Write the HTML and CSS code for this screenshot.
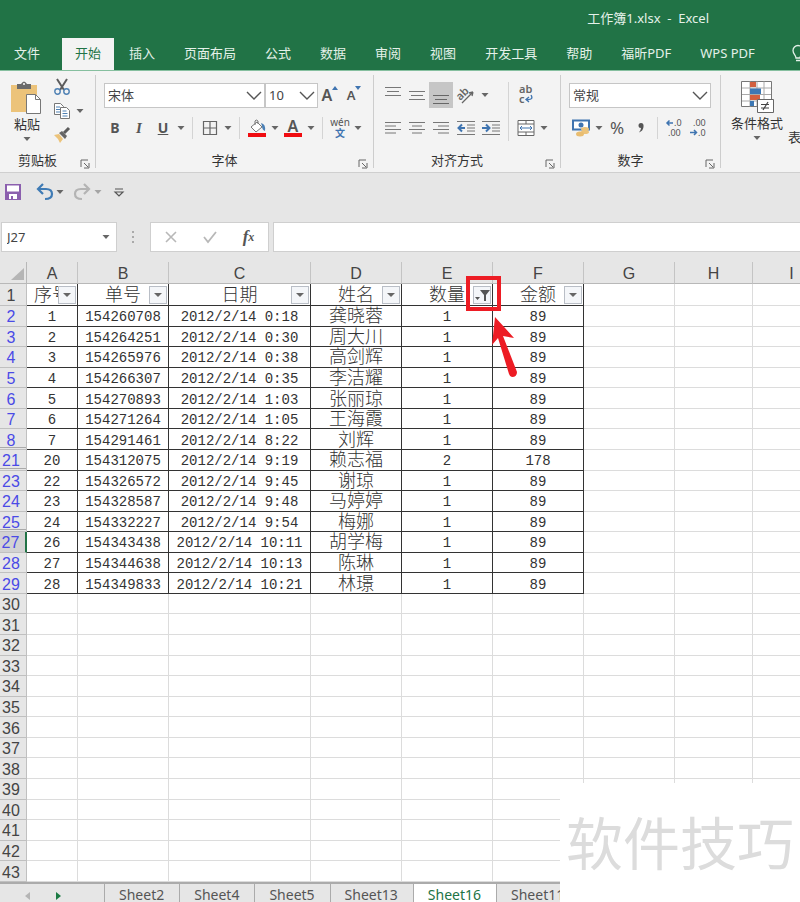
FILE: index.html
```html
<!DOCTYPE html>
<html lang="zh-CN">
<head>
<meta charset="utf-8">
<title>工作簿1.xlsx - Excel</title>
<link rel="stylesheet" href="styles.css">
</head>
<body>
<svg class="defs" aria-hidden="true">
  <symbol id="caret" viewBox="0 0 12 12"><path d="M2.500 4h7L6 8z" fill="#666"/></symbol>
  <symbol id="chevron" viewBox="0 0 16 10"><path d="M1 1l7 7 7-7" fill="none" stroke="#555" stroke-width="1.400"/></symbol>
  <symbol id="launcher" viewBox="0 0 10 10"><path d="M1 8V1h7M4 4l4 4M9 4v5H4" fill="none" stroke="#666"/></symbol>
</svg>
<header class="titlebar"><h1>工作簿1.xlsx&nbsp; -&nbsp; Excel</h1></header>
<nav class="tabs">
  <a class="file" href="#">文件</a><a class="active" href="#">开始</a><a href="#">插入</a><a href="#">页面布局</a><a href="#">公式</a><a href="#">数据</a><a href="#">审阅</a><a href="#">视图</a><a href="#">开发工具</a><a href="#">帮助</a><a href="#">福昕PDF</a><a href="#">WPS PDF</a>
  <svg class="bulb" width="14" height="18" viewBox="0 0 14 18"><path d="M5 13c0-3-3-4-3-7.500a5 5 0 0 1 10 0c0 3.500-3 4.500-3 7.500zM5 15.500h4" fill="none" stroke="#e4f1e9" stroke-width="1.300"/></svg>
</nav>

<section class="ribbon">
  <div class="group">
    <div class="body clip">
      <button class="big">
        <svg width="34" height="34" viewBox="0 0 34 34"><path d="M1 4h26v27H1z" fill="#ecc37a"/><path d="M7 3h4q3-5 6 0h4v5H7z" fill="#6b6b6b"/><circle cx="14" cy="3" r="1" fill="#fff"/><path d="M16.500 13.500h9l5 5v14h-14z" fill="#fff" stroke="#777"/><path d="M25.500 13.500v5h5" fill="none" stroke="#777"/></svg>
        <span>粘贴</span><svg class="caret"><use href="#caret"/></svg>
      </button>
      <div class="stack">
        <div><button class="b" aria-label="剪切"><svg width="18" height="18" viewBox="0 0 18 18"><path d="M4 1l7 11M14 1L7 12" stroke="#5c5c5c" stroke-width="2"/><circle cx="4.500" cy="13.500" r="2.700" fill="none" stroke="#4f81b4" stroke-width="1.400"/><circle cx="13.500" cy="13.500" r="2.700" fill="none" stroke="#4f81b4" stroke-width="1.400"/></svg></button></div>
        <div><button class="b" aria-label="复制"><svg width="18" height="18" viewBox="0 0 18 18"><path d="M1.500 1.500h6l3 3v8h-9z" fill="#fff" stroke="#777"/><path d="M3 5h4M3 7.500h4M3 10h4" stroke="#4f81b4"/><path d="M7.500 5.500h6l3 3v8h-9z" fill="#fff" stroke="#777"/><path d="M9.500 9h4M9.500 11.500h5M9.500 14h5" stroke="#4f81b4"/></svg></button><button class="c" aria-label="复制选项"><svg class="caret"><use href="#caret"/></svg></button></div>
        <div><button class="b" aria-label="格式刷"><svg width="18" height="18" viewBox="0 0 18 18"><path d="M1 9l5-1 4 5-3 4Q5 12 1 9z" fill="#ecc37a"/><path d="M6 7l6 6 2-3-5-5z" fill="#666"/><path d="M11 7l5-5" stroke="#5c5c5c" stroke-width="3"/></svg></button></div>
      </div>
    </div>
    <div class="label"><span>剪贴板</span><button aria-label="剪贴板设置"><svg><use href="#launcher"/></svg></button></div>
  </div>

  <div class="group">
    <div class="body rows">
      <div class="row">
        <label class="combo font"><select aria-label="字体"><option>宋体</option></select><svg><use href="#chevron"/></svg></label><label class="combo size"><select aria-label="字号"><option>10</option></select><svg><use href="#chevron"/></svg></label>
        <button class="b grow" aria-label="增大字号">A<svg width="6" height="4" viewBox="0 0 6 4"><path d="M0 4h6L3 0z" fill="#3f74b0"/></svg></button>
        <button class="b shrink" aria-label="减小字号">A<svg width="6" height="4" viewBox="0 0 6 4"><path d="M0 0h6L3 4z" fill="#3f74b0"/></svg></button>
      </div>
      <div class="row">
        <button class="b bold">B</button><button class="b ital">I</button><button class="b under">U</button><button class="c" aria-label="下划线选项"><svg class="caret"><use href="#caret"/></svg></button><i class="sep"></i>
        <button class="b" aria-label="边框"><svg width="16" height="16" viewBox="0 0 16 16"><path d="M1.500 1.500h13v13h-13zM8 1v14M1 8h14" fill="none" stroke="#666" stroke-width="1.200"/></svg></button><button class="c" aria-label="边框选项"><svg class="caret"><use href="#caret"/></svg></button><i class="sep"></i>
        <button class="b" aria-label="填充颜色"><svg width="18" height="18" viewBox="0 0 18 18"><path d="M3 8l6-5 5 5-6 5z" fill="#fff" stroke="#777"/><path d="M7 6V2q1-2 3 0v3" fill="none" stroke="#777"/><path d="M13 4q5 1 4 8-3-1-3-5z" fill="#4a7fb5"/><path d="M0 14h18v4H0z" fill="#f00c10"/></svg></button><button class="c" aria-label="填充选项"><svg class="caret"><use href="#caret"/></svg></button>
        <button class="b fontcolor" aria-label="字体颜色">A</button><button class="c" aria-label="颜色选项"><svg class="caret"><use href="#caret"/></svg></button><i class="sep"></i>
        <button class="b wen"><span>wén</span><b>文</b></button><button class="c" aria-label="拼音选项"><svg class="caret"><use href="#caret"/></svg></button>
      </div>
    </div>
    <div class="label"><span>字体</span><button aria-label="字体设置"><svg><use href="#launcher"/></svg></button></div>
  </div>

  <div class="group">
    <div class="body align">
      <div class="rows">
        <div class="row">
          <button class="b" aria-label="顶端对齐"><svg width="16" height="18" viewBox="0 0 16 18"><path d="M0 1.500h16M2 5.500h12M0 9.500h16" stroke="#777"/></svg></button><button class="b" aria-label="垂直居中"><svg width="16" height="18" viewBox="0 0 16 18"><path d="M0 5.500h16M2 9.500h12M0 13.500h16" stroke="#777"/></svg></button><button class="b on" aria-label="底端对齐"><svg width="16" height="18" viewBox="0 0 16 18"><path d="M0 9.500h16M2 13.500h12M0 17.500h16" stroke="#666"/></svg></button><button class="b wide" aria-label="方向"><svg width="20" height="20" viewBox="0 0 20 20"><text x="0" y="12" font-size="11" font-weight="600" fill="#666" transform="rotate(-45 7 9)">ab</text><path d="M6 18L17 7M17 7l-4 1M17 7l-1 4" stroke="#666" stroke-width="1.300" fill="none"/></svg></button><button class="c" aria-label="方向选项"><svg class="caret"><use href="#caret"/></svg></button>
        </div>
        <div class="row">
          <button class="b" aria-label="左对齐"><svg width="16" height="14" viewBox="0 0 16 14"><path d="M0 1.500h16M0 5h11M0 8.500h16M0 12h11" stroke="#777"/></svg></button><button class="b" aria-label="居中"><svg width="16" height="14" viewBox="0 0 16 14"><path d="M0 1.500h16M3 5h10M0 8.500h16M3 12h10" stroke="#777"/></svg></button><button class="b" aria-label="右对齐"><svg width="16" height="14" viewBox="0 0 16 14"><path d="M0 1.500h16M5 5h11M0 8.500h16M5 12h11" stroke="#777"/></svg></button><button class="b wide" aria-label="减少缩进"><svg width="18" height="16" viewBox="0 0 18 16"><path d="M0 1.500h18M10 5h8M10 8h8M10 11h8M0 14.500h18" stroke="#777"/><path d="M8 8H2M5 4.500L1.500 8 5 11.500" fill="none" stroke="#3f74b0" stroke-width="2"/></svg></button><button class="b" aria-label="增加缩进"><svg width="18" height="16" viewBox="0 0 18 16"><path d="M0 1.500h18M10 5h8M10 8h8M10 11h8M0 14.500h18" stroke="#777"/><path d="M0 8h7M4 4.500L7.500 8 4 11.500" fill="none" stroke="#3f74b0" stroke-width="2"/></svg></button>
        </div>
      </div>
      <i class="sep tall"></i>
      <div class="rows">
        <div class="row"><button class="b" aria-label="自动换行"><svg width="18" height="22" viewBox="0 0 18 22"><text x="2" y="9" font-size="11" font-weight="600" fill="#666">ab</text><text x="2" y="19" font-size="11" font-weight="600" fill="#666">c</text><path d="M14 11q3 5-4 4.500M12 13l-3 2.500 3 2.500" fill="none" stroke="#3f74b0" stroke-width="1.300"/></svg></button></div>
        <div class="row"><button class="b" aria-label="合并后居中"><svg width="18" height="16" viewBox="0 0 18 16"><path d="M1 .5h16v15H1zM1 4h16M1 12h16M9 .5V4M9 12v3.500" fill="#fff" stroke="#666"/><path d="M3 8h12M5 6L3 8l2 2M13 6l2 2-2 2" fill="none" stroke="#3f74b0"/></svg></button><button class="c" aria-label="合并选项"><svg class="caret"><use href="#caret"/></svg></button></div>
      </div>
    </div>
    <div class="label"><span>对齐方式</span><button aria-label="对齐设置"><svg><use href="#launcher"/></svg></button></div>
  </div>

  <div class="group">
    <div class="body rows num">
      <div class="row"><label class="combo format"><select aria-label="数字格式"><option>常规</option></select><svg><use href="#chevron"/></svg></label></div>
      <div class="row">
        <button class="b" aria-label="会计格式"><svg width="18" height="18" viewBox="0 0 18 18"><path d="M1 1.500h16v9H1z" fill="#fff" stroke="#3f74b0" stroke-width="2"/><circle cx="9" cy="6" r="2.500" fill="#3f74b0"/><ellipse cx="13" cy="10" rx="4" ry="2" fill="#ecc37a"/><ellipse cx="13" cy="13" rx="4" ry="2" fill="#ecc37a"/><ellipse cx="8" cy="15" rx="4" ry="2.500" fill="#e9bd70"/></svg></button><button class="c" aria-label="会计选项"><svg class="caret"><use href="#caret"/></svg></button>
        <button class="b pct">%</button><button class="b" aria-label="千位分隔"><svg width="6" height="10" viewBox="0 0 6 10"><path d="M3 0q3 0 2.500 4Q5 8 1 9.500 3 7 3 5 .5 5 .5 2.500.500 0 3 0z" fill="#555"/></svg></button><i class="sep"></i>
        <button class="b" aria-label="增加小数位"><svg width="18" height="20" viewBox="0 0 18 20"><text x="9" y="8" font-size="9" fill="#555">.0</text><text x="3" y="18" font-size="9" fill="#555">.00</text><path d="M8 5H2M4.500 2.500L2 5l2.500 2.500" fill="none" stroke="#3f74b0" stroke-width="1.500"/></svg></button><button class="b" aria-label="减少小数位"><svg width="18" height="20" viewBox="0 0 18 20"><text x="4" y="8" font-size="9" fill="#555">.00</text><text x="9" y="18" font-size="9" fill="#555">.0</text><path d="M1 14.500h7M5 12l2.500 2.500L5 17" fill="none" stroke="#3f74b0" stroke-width="1.500"/></svg></button>
      </div>
    </div>
    <div class="label"><span>数字</span><button aria-label="数字设置"><svg><use href="#launcher"/></svg></button></div>
  </div>

  <div class="group last">
    <div class="body styles">
      <button class="big">
        <svg width="34" height="34" viewBox="0 0 34 34"><path d="M1.500 1.500h30v25h-30z" fill="#fff" stroke="#777"/><path d="M10 1.500v25M17 1.500v25M24 1.500v25M2 8h29M2 14.500h29M2 21h29" stroke="#aaa"/><path d="M10 2h6v5h-6zM10 15h10v5H10z" fill="#d2603f"/><path d="M10 8.500h11V14H10zM10 21h4v5h-4z" fill="#3d78b4"/><path d="M17.500 19.500h16v13h-16z" fill="#fff" stroke="#666"/><path d="M21 24.500h8M21 28h8M28 22l-5 8" stroke="#444" stroke-width="1.200"/></svg>
        <span>条件格式</span><svg class="caret"><use href="#caret"/></svg>
      </button>
      <button class="table-format">表</button>
    </div>
  </div>
</section>

<div class="quick">
  <button aria-label="保存"><svg width="16" height="16" viewBox="0 0 16 16"><path d="M0 0h16v16H0z" fill="#8b5fae"/><path d="M2 1.500h12v6H2zM4 10h8v5H4z" fill="#fff"/><path d="M6 12h2v3H6z" fill="#8b5fae"/></svg></button>
  <button aria-label="撤销"><svg width="18" height="16" viewBox="0 0 18 16"><path d="M2 5h8q6 0 6 5t-7 5M7 0L2 5l5 5" fill="none" stroke="#3f7bb5" stroke-width="2.200"/></svg></button><button class="c" aria-label="撤销选项"><svg class="caret"><use href="#caret"/></svg></button>
  <button class="redo" aria-label="恢复"><svg width="18" height="16" viewBox="0 0 18 16"><path d="M15 5H7q-6 0-6 5t7 5M10 0l5 5-5 5" fill="none" stroke="#b4b4b4" stroke-width="2.200"/></svg></button><button class="c dim" aria-label="恢复选项"><svg class="caret"><use href="#caret"/></svg></button>
  <button class="more" aria-label="自定义工具栏"><svg width="10" height="9" viewBox="0 0 10 9"><path d="M1 1h8M1 4h8L5 8z" fill="none" stroke="#555" stroke-width="1.200"/></svg></button>
</div>

<div class="formula">
  <label class="namebox"><input value="J27" aria-label="名称框"><svg class="caret"><use href="#caret"/></svg></label>
  <svg class="dots" width="3" height="13" viewBox="0 0 3 13"><path d="M0 0h2v2H0zM0 5h2v2H0zM0 10h2v2H0z" fill="#aaa"/></svg>
  <div class="fx">
    <button aria-label="取消"><svg width="12" height="12" viewBox="0 0 12 12"><path d="M1 1l10 10M11 1L1 11" stroke="#b8b8b8" stroke-width="1.600"/></svg></button>
    <button aria-label="输入"><svg width="14" height="12" viewBox="0 0 14 12"><path d="M1 6l4 5 8-10" fill="none" stroke="#b8b8b8" stroke-width="1.800"/></svg></button>
    <button class="fn"><i>f</i><small>x</small></button>
  </div>
  <input class="entry" aria-label="编辑栏">
</div>

<main class="sheet">
  <table>
    <colgroup><col class="w-head"><col class="w-a"><col class="w-m"><col class="w-c"><col class="w-m"><col class="w-m"><col class="w-m"><col class="w-m"><col class="w-h"><col class="w-h"></colgroup>
    <thead><tr><th class="corner"><svg width="13" height="12" viewBox="0 0 13 12"><path d="M13 0v12H0z" fill="#b5b5b5"/></svg></th><th>A</th><th>B</th><th>C</th><th>D</th><th>E</th><th>F</th><th>G</th><th>H</th><th>I</th></tr></thead>
    <tbody id="rows"></tbody>
  </table>
</main>

<footer class="sheets">
  <div class="arrows"><button aria-label="上一张"><svg width="5" height="8" viewBox="0 0 5 8"><path d="M5 0v8L0 4z" fill="#b5b5b5"/></svg></button><button aria-label="下一张"><svg width="5" height="8" viewBox="0 0 5 8"><path d="M0 0v8l5-4z" fill="#1b7a43"/></svg></button></div>
  <a href="#">Sheet2</a><a href="#">Sheet4</a><a href="#">Sheet5</a><a href="#">Sheet13</a><a class="active" href="#">Sheet16</a><a href="#">Sheet11</a>
</footer>
<div class="brand">软件技巧</div>
<script src="rows.js"></script>
</body>
</html>
```
FILE: styles.css
```css
* { box-sizing: border-box; }
body { margin: 0; height: 100vh; display: flex; flex-direction: column; overflow: hidden; position: relative; background: #e6e6e6; color: #333; font: 13px/18px "Noto Sans", "Noto Sans CJK SC", sans-serif; }
button { border: 0; padding: 0; background: none; color: #555; font: inherit; display: flex; align-items: center; justify-content: center; }
a { text-decoration: none; color: inherit; }
svg { display: block; flex: none; overflow: visible; }
.defs { position: absolute; width: 0; height: 0; }
.caret { width: 12px; height: 12px; }

.titlebar { height: 38px; flex: none; background: #217346; color: #e4f1e9; text-align: right; padding: 9px 91px 0 0; }
.titlebar h1 { margin: 0; font-size: 13px; font-weight: 400; }
.tabs { height: 32px; flex: none; display: flex; gap: 1px; background: #217346; color: #e4f1e9; white-space: nowrap; }
.tabs a { padding: 6px 14px; }
.tabs .file { margin-right: 7px; }
.tabs .active { background: #f3f3f3; color: #217346; padding: 6px 13px; }
.bulb { margin: 7px 0 0 21px; }

.ribbon { height: 103px; flex: none; display: flex; background: #f3f3f3; border-top: 1px solid #86bf9f; border-bottom: 1px solid #cfcfcf; white-space: nowrap; overflow: hidden; }
.group { display: flex; flex-direction: column; justify-content: space-between; position: relative; flex: none; padding-right: 1px; }
.group::after { content: ""; position: absolute; right: 0; top: 4px; bottom: 4px; width: 1px; background: #cdcdcd; }
.group.last { padding: 0; }
.group.last::after { display: none; }
.body { display: flex; }
.rows { display: flex; flex-direction: column; gap: 7px; }
.body.rows { padding: 11px 7px 0 7px; }
.row { display: flex; height: 26px; align-items: center; }
.label { display: flex; height: 21px; color: #333; }
.label span { flex: 1; text-align: center; }
.label button { width: 20px; padding-top: 4px; }
.label svg { width: 10px; height: 10px; }
.b { width: 24px; height: 26px; }
.b.wide { width: 26px; }
.b.on { background: #c6c6c6; }
.c { width: 12px; height: 26px; }
.sep { width: 1px; height: 22px; margin: 0 5px; background: #d4d4d4; }
.sep.tall { height: 59px; }
.combo { position: relative; display: block; height: 25px; }
.combo select { appearance: none; width: 100%; height: 100%; border: 1px solid #c6c6c6; border-radius: 0; background: #fff; color: #444; font: inherit; padding: 0 3px; }
.combo svg { position: absolute; right: 3px; top: 8px; width: 16px; height: 10px; pointer-events: none; }
.combo.font { width: 161px; margin-left: 1px; }
.combo.size { width: 53px; }
.combo.format { width: 142px; }
.grow, .shrink { font-weight: 600; align-items: flex-start; padding-top: 4px; }
.grow { font-size: 16px; }
.bold { font-weight: 700; font-size: 14px; }
.ital { font: italic 700 15px "Liberation Serif", serif; }
.under { font-weight: 700; text-decoration: underline; font-size: 14px; }
.fontcolor { font-weight: 600; font-size: 16px; line-height: 14px; height: 18px; border-bottom: 4px solid #f00c10; width: 18px; margin: 0 3px; }
.wen { flex-direction: column; font-size: 10px; line-height: 11px; }
.wen b { color: #3f74b0; }
.pct { font-size: 17px; }

.clip { padding: 5px 4px 0 5px; gap: 1px; }
.big { flex-direction: column; width: 44px; color: #333; line-height: 18px; }
.stack { width: 41px; padding-top: 1px; }
.stack div { display: flex; height: 24px; }
.stack .b { height: 20px; }
.stack .c { height: 20px; }
.align { padding: 11px 10px 0 7px; }
.body.num { padding-left: 8px; padding-right: 8px; }
.num .sep { margin: 0 4px; }
.num .row { width: 143px; }
.styles { padding: 6px 0 0 8px; }
.styles .big { width: 56px; }
.table-format { color: #333; margin: 51px 0 0 3px; }

.quick { height: 38px; flex: none; display: flex; align-items: center; padding-left: 4px; }
.quick button { width: 18px; height: 24px; }
.quick button:nth-child(2) { margin-left: 14px; }
.quick button.c { width: 12px; }
.quick .redo { margin-left: 8px; }
.quick .dim { opacity: .5; }
.quick .more { margin-left: 6px; }

.formula { flex: none; display: flex; align-items: center; height: 30px; margin: 11px 0 10px; padding-left: 1px; }
.namebox { display: flex; align-items: center; width: 116px; height: 30px; background: #fff; border: 1px solid #cfcfcf; padding: 0 4px 0 5px; }
.namebox input { border: 0; width: 93px; padding: 0; font: inherit; color: #444; outline: 0; }
.dots { margin: 0 15px; }
.fx { display: flex; align-items: center; height: 30px; width: 119px; background: #fff; border: 1px solid #cfcfcf; }
.fx button { flex: 1; }
.fn { font: 17px "Liberation Serif", serif; }
.fn small { font: italic 700 12px "Liberation Serif", serif; }
.fn i { font-weight: 700; }
.entry { flex: 1; min-width: 0; height: 30px; margin-left: 4px; border: 1px solid #cfcfcf; border-right: 0; background: #fff; }

.sheet { flex: 1; min-height: 0; overflow: hidden; background: #fff; }
table { table-layout: fixed; width: 831px; height: 100%; border-collapse: separate; border-spacing: 0; }
.w-head { width: 27px; } .w-a { width: 51px; } .w-m { width: 91px; } .w-c { width: 142px; } .w-h { width: 78px; }
th, td { padding: 0; text-align: center; font-weight: 300; white-space: nowrap; border-right: 1px solid #dcdcdc; border-bottom: 1px solid #dcdcdc; line-height: 16px; }
thead th { height: 22px; padding-top: 2px; background: #e6e6e6; border-color: #b8b8b8; font: 400 16px/18px "Liberation Sans", sans-serif; color: #444; }
thead th:not(:first-child) { border-right-color: #c4c4c4; }
.corner svg { margin: 0 0 0 11px; }
tbody th { background: #e6e6e6; border-color: #c0c0c0; font: 16px/16px "Liberation Sans", sans-serif; color: #444; padding: 3px 4px 0 0; }
tbody .hit th { color: #4a4ae6; }
tbody .gap th { box-shadow: inset 0 -1px #e6e6e6, inset 0 -2px #aaa; }
tbody .current th { background: #d2d2d2; border-right: 2px solid #217346; }
td.filled { border-color: #333; color: #333; font: 300 14px/16px "Liberation Mono", "Noto Sans CJK SC", monospace; padding-top: 3px; }
td.name, td.field { font-size: 18px; }
td.field { height: 22px; position: relative; }
.filter { position: absolute; right: 1px; top: 2px; width: 18px; height: 18px; border: 1px solid #b9bec6; background: #f4f6f9; }
.mark { position: absolute; left: 63px; top: -9px; z-index: 2; pointer-events: none; }

.sheets { position: relative; height: 20px; flex: none; display: flex; overflow: hidden; border-top: 2px solid #ababab; color: #555; font-size: 14px; }
.sheets a { padding: 2px 15px 2px 14px; border-left: 1px solid #ababab; }
.sheets .active { background: #fff; color: #217346; margin-top: -2px; padding-top: 4px; }
.arrows { width: 104px; flex: none; display: flex; padding: 4px 0 0 21px; gap: 19px; }
.arrows button { width: 12px; height: 16px; }
.brand { position: absolute; right: 0; bottom: 0; width: 240px; height: 119px; background: #fff; color: #dcdcdc; font: 57px/115px "Noto Sans CJK SC", sans-serif; text-align: center; white-space: nowrap; }
```
FILE: rows.js
```js
const fields = ['序号', '单号', '日期', '姓名', '数量', '金额'];
const records = [
  [2, 1, '154260708', '0:18', '龚晓蓉', 1, 89],
  [3, 2, '154264251', '0:30', '周大川', 1, 89],
  [4, 3, '154265976', '0:38', '高剑辉', 1, 89],
  [5, 4, '154266307', '0:35', '李洁耀', 1, 89],
  [6, 5, '154270893', '1:03', '张丽琼', 1, 89],
  [7, 6, '154271264', '1:05', '王海霞', 1, 89],
  [8, 7, '154291461', '8:22', '刘辉', 1, 89],
  [21, 20, '154312075', '9:19', '赖志福', 2, 178],
  [23, 22, '154326572', '9:45', '谢琼', 1, 89],
  [24, 23, '154328587', '9:48', '马婷婷', 1, 89],
  [25, 24, '154332227', '9:54', '梅娜', 1, 89],
  [27, 26, '154343438', '10:11', '胡学梅', 1, 89],
  [28, 27, '154344638', '10:13', '陈琳', 1, 89],
  [29, 28, '154349833', '10:21', '林璟', 1, 89]
];
const blank = n => '<td></td>'.repeat(n);
const arrow = '<path d="M4 6h8l-4 4z" fill="#666"/>';
const funnel = '<path d="M6 3h10l-4 5v6h-2V8zM1 10h5l-2.500 3z" fill="#555"/>';
const mark = '<svg class="mark" width="52" height="106" viewBox="0 0 52 106"><path d="M3 3h31v31H3z" fill="none" stroke="#ed1c24" stroke-width="4"/><path d="M30 42l19 21-11-2 14 36q0 5-5 5-2 0-3-3L33 63l-6 7z" fill="#ed1c24"/></svg>';

let html = '<tr><th>1</th>' + fields.map(f => {
  const active = f === '数量';
  return `<td class="filled field">${f}<button class="filter" aria-label="筛选${f}"><svg width="16" height="16" viewBox="0 0 16 16">${active ? funnel : arrow}</svg></button>${active ? mark : ''}</td>`;
}).join('') + blank(3) + '</tr>';

for (const [row, id, order, time, name, count, sum] of records) {
  const state = [8, 21, 25].includes(row) ? ' gap' : row === 27 ? ' current' : '';
  html += `<tr class="hit${state}"><th>${row}</th><td class="filled">${id}</td><td class="filled">${order}</td><td class="filled">2012/2/14 ${time}</td><td class="filled name">${name}</td><td class="filled">${count}</td><td class="filled">${sum}</td>${blank(3)}</tr>`;
}
for (let row = 30; row <= 43; row++) html += `<tr><th>${row}</th>${blank(9)}</tr>`;
document.getElementById('rows').innerHTML = html;
```
